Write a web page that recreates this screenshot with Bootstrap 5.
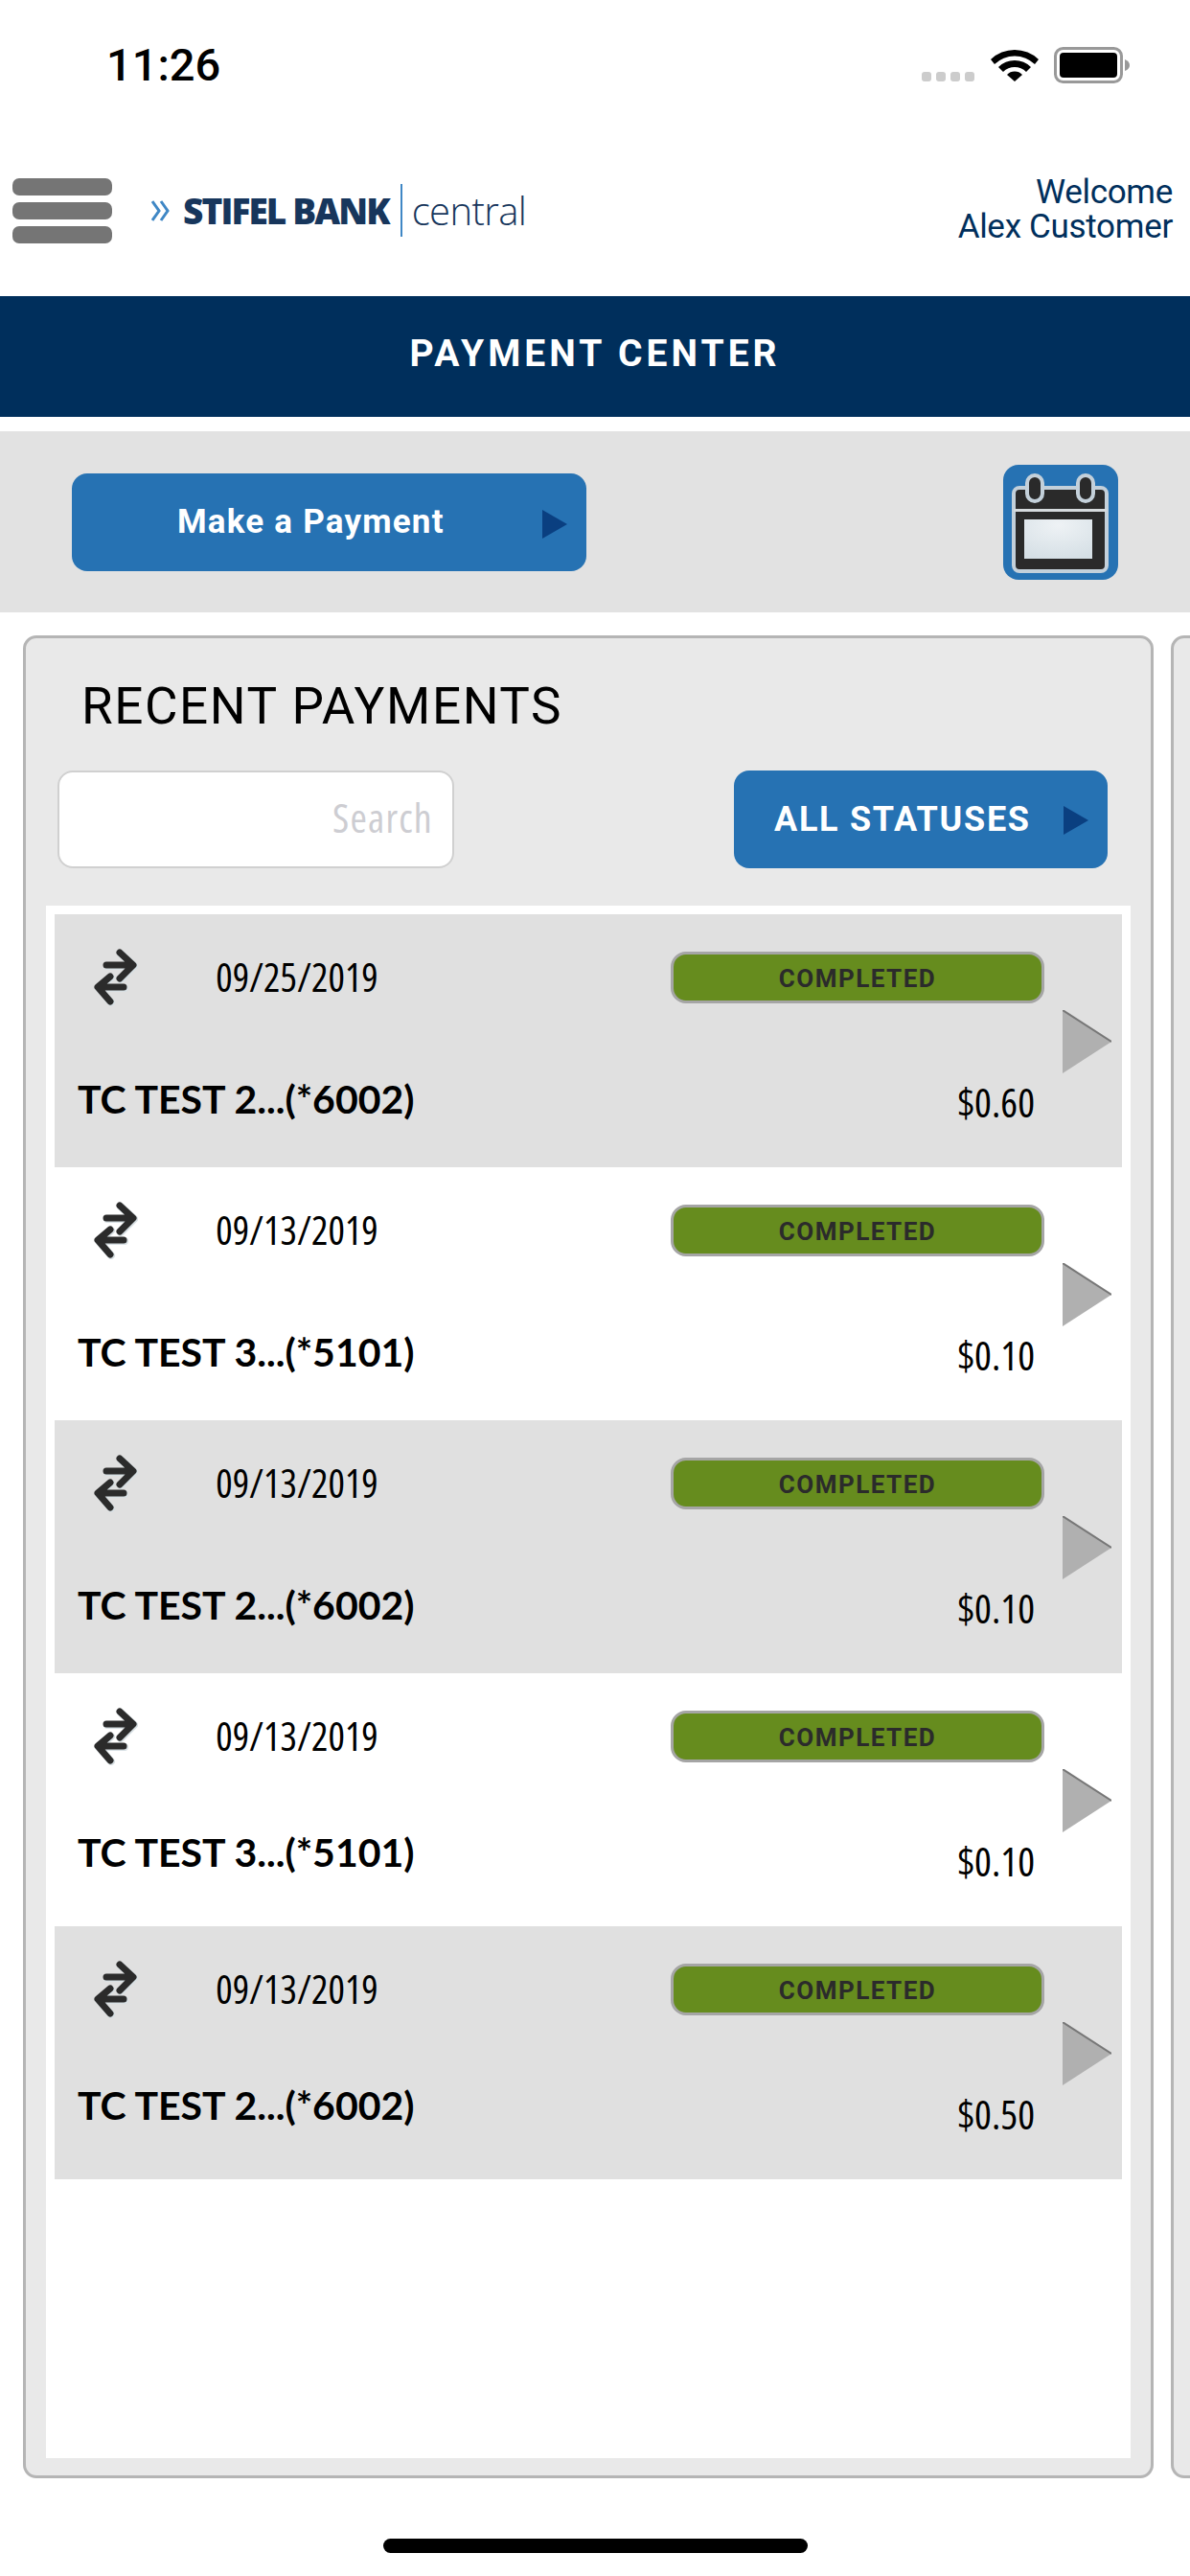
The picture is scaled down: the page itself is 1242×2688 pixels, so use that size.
<!DOCTYPE html>
<html lang="en">
<head>
    <meta charset="UTF-8">
    <meta name="viewport" content="width=device-width, initial-scale=1.0">
    <title>Payment Center</title>
    <link href="https://cdn.jsdelivr.net/npm/bootstrap@5.3.2/dist/css/bootstrap.min.css" rel="stylesheet">
    <script src="https://cdn.jsdelivr.net/npm/bootstrap@5.3.2/dist/js/bootstrap.bundle.min.js"></script>
    <style>
        html, body { background: #fff; }
        body { width: 1242px; height: 2688px; overflow: hidden; font-family: "Open Sans", sans-serif; color: #000; }

        /* status bar */
        .status-bar { height: 130px; padding-top: 42px; align-items: flex-start; }
        .status-time { margin-left: 111px; font: 500 47px/52px Roboto, sans-serif; }
        .status-right { margin-left: auto; margin-right: 62px; margin-top: 7px; }
        .signal-dots { gap: 5px; margin-top: 26px; margin-right: 17px; }
        .signal-dots i { width: 10px; height: 10px; border-radius: 3px; background: #ccc; }

        /* top header */
        .top-head { height: 179px; padding: 0 18px 0 13px; }
        .burger { width: 104px; gap: 7px; }
        .burger i { height: 18px; border-radius: 7px; background: #757575; }
        .logo-wrap { margin-left: 41px; color: #17365c; }
        .logo-bold { font: 800 37px/40px "Open Sans", sans-serif; letter-spacing: -1.9px; margin-left: 13px; }
        .logo-rule { width: 2px; height: 55px; background: #3f87c5; margin: 0 10px 0 12px; }
        .logo-thin { font: 300 40px/40px "Open Sans", sans-serif; letter-spacing: -.6px; }
        .welcome { margin: 0 0 2px auto; text-align: right; color: #002f5c; font: 400 35px/36px Roboto, sans-serif; letter-spacing: -.3px; }

        .page-title { height: 126px; background: #002f5c; color: #fff; font: 700 39px/120px Roboto, sans-serif; letter-spacing: 4px; text-align: center; }

        /* action band */
        .action-band { height: 189px; margin-top: 15px; background: #e2e2e2; padding: 0 75px; }
        .pay-btn { width: 537px; height: 102px; background: #2672b3; border: 0; border-radius: 16px; color: #fff; font: 700 35px/96px Roboto, sans-serif; letter-spacing: 1.2px; padding: 0 0 0 110px; text-align: left; }
        .blue-tri { width: 0; height: 0; border-left: 26px solid #0a3f80; border-top: 15px solid transparent; border-bottom: 15px solid transparent; }
        .pay-btn .blue-tri { margin: 4px 20px 0 auto; }
        .cal-btn { width: 120px; height: 120px; background: #2672b3; border-radius: 16px; margin-left: auto; }

        /* cards */
        .card-strip { margin-top: 24px; gap: 18px; overflow: hidden; }
        .pay-panel { flex: 0 0 1180px; margin-left: 24px; height: 1923px; background: #e9e9e9; border: 3px solid #b5b5b5; border-radius: 14px; padding: 0 21px; }
        .next-panel { flex: 0 0 100px; height: 1923px; background: #e9e9e9; border: 3px solid #b5b5b5; border-radius: 14px; }
        .panel-title { font: 400 53px/60px Roboto, sans-serif; letter-spacing: 1.6px; margin: 41px 0 0 37px; }
        .panel-tools { margin: 37px 24px 0 12px; }
        .search-box { width: 414px; height: 102px; background: #fff; border: 2px solid #d0d0d0; border-radius: 16px; color: #cdcdd2; font: 400 42px/94px "Open Sans", sans-serif; font-stretch: 75%; letter-spacing: 1.2px; text-align: right; padding-right: 20px; }
        .status-btn { width: 390px; height: 102px; background: #2672b3; border: 0; border-radius: 16px; color: #fff; font: 700 36px/92px Roboto, sans-serif; letter-spacing: 1.7px; padding: 0 0 0 42px; text-align: left; margin-left: auto; }
        .status-btn .blue-tri { margin: 2px 20px 0 auto; }

        .pay-list { height: 1620px; background: #fff; margin-top: 39px; padding: 9px; }
        .pay-row { height: 264px; }
        .pay-row.shaded { background: #e0e0e0; }
        .row-main { width: 1052px; }
        .row-top { padding: 36px 0 0 41px; height: 96px; }
        .row-date { width: 312px; text-align: center; margin: -3px 0 0 10px; font: 400 41px/56px "Open Sans", sans-serif; font-stretch: 75%; }
        .status-pill { width: 390px; height: 54px; margin-left: 234px; background: #668c1e; border: 3px solid #a5a5a5; border-radius: 16px; color: #2b2b2b; font: 700 26px/50px Roboto, sans-serif; letter-spacing: 1.5px; text-align: center; }
        .row-bottom { padding: 72px 29px 0 24px; }
        .row-name { font: 700 41px/50px Lato, sans-serif; }
        .row-amt { font: 400 42px/50px "Open Sans", sans-serif; font-stretch: 75%; margin-top: 3px; }
        .row-name.up { margin-top: -6px; }
        .row-arrow { margin-top: 100px; }
        .row-arrow svg { display: block; }
        .home-bar { width: 443px; height: 15px; border-radius: 8px; background: #000; margin: 63px auto 0; }
    </style>
</head>
<body>

<div class="status-bar d-flex">
    <div class="status-time">11:26</div>
    <div class="status-right d-flex">
        <div class="signal-dots d-flex"><i></i><i></i><i></i><i></i></div>
        <svg width="50" height="36" viewBox="0 0 50 36"><path d="M0 13 A36 36 0 0 1 50 13 L46 18 A30 30 0 0 0 4 18Z M8 21 A24 24 0 0 1 42 21 L37 26 A17 17 0 0 0 13 26Z M17 29 A11 11 0 0 1 33 29 L25 36Z" fill="#000"/></svg>
        <svg width="80" height="38" viewBox="0 0 80 38" class="ms-3"><rect x="1.5" y="1.5" width="69" height="35" rx="8" fill="#fff" stroke="#999" stroke-width="3"/><rect x="6" y="6" width="60" height="26" rx="4" fill="#000"/><path d="M74 13 Q79 15 79 19 Q79 23 74 25Z" fill="#999"/></svg>
    </div>
</div>

<div class="top-head d-flex align-items-center">
    <div class="burger d-flex flex-column"><i></i><i></i><i></i></div>
    <div class="logo-wrap d-flex align-items-center">
        <svg width="20" height="22" viewBox="0 0 20 22"><path d="M1 1 L8 11 L1 21 M10 1 L17 11 L10 21" fill="none" stroke="#3f87c5" stroke-width="3"/></svg>
        <span class="logo-bold">STIFEL BANK</span><span class="logo-rule"></span><span class="logo-thin">central</span>
    </div>
    <div class="welcome">Welcome<br>Alex Customer</div>
</div>

<div class="page-title">PAYMENT CENTER</div>

<div class="action-band d-flex align-items-center">
    <button type="button" class="pay-btn d-flex align-items-center">Make a Payment<span class="blue-tri"></span></button>
    <div class="cal-btn d-flex align-items-center justify-content-center">
        <svg width="120" height="120" viewBox="0 0 120 120">
            <defs><radialGradient id="calFill" cx=".5" cy=".15" r=".9"><stop offset="0" stop-color="#eef2f5"/><stop offset="1" stop-color="#d5dfe5"/></radialGradient></defs>
            <rect x="11" y="24" width="97" height="87" rx="6" fill="#2a2a2a" stroke="#c3d0da" stroke-width="4"/>
            <rect x="25" y="11" width="16" height="27" rx="8" fill="#2a2a2a" stroke="#c3d0da" stroke-width="4"/>
            <rect x="78" y="11" width="16" height="27" rx="8" fill="#2a2a2a" stroke="#c3d0da" stroke-width="4"/>
            <rect x="11" y="46" width="97" height="3" fill="#d5dadd"/>
            <rect x="22" y="57" width="71" height="41" fill="url(#calFill)"/>
        </svg>
    </div>
</div>

<div class="card-strip d-flex">
    <div class="pay-panel">
        <div class="panel-title">RECENT PAYMENTS</div>
        <div class="panel-tools d-flex">
            <div class="search-box">Search</div>
            <button type="button" class="status-btn d-flex align-items-center">ALL STATUSES<span class="blue-tri"></span></button>
        </div>
        <div class="pay-list" id="payList"></div>
    </div>
    <div class="next-panel"></div>
</div>

<div class="home-bar"></div>

<script>
    const payments = [
        { date: "09/25/2019", name: "TC TEST 2...(*6002)", amt: "$0.60" },
        { date: "09/13/2019", name: "TC TEST 3...(*5101)", amt: "$0.10" },
        { date: "09/13/2019", name: "TC TEST 2...(*6002)", amt: "$0.10" },
        { date: "09/13/2019", name: "TC TEST 3...(*5101)", amt: "$0.10", up: true },
        { date: "09/13/2019", name: "TC TEST 2...(*6002)", amt: "$0.50", up: true }
    ];
    const swapIcon = `<svg width="46" height="60" viewBox="0 0 46 60"><g fill="none" stroke-linecap="round" stroke-linejoin="round"><path d="M14 18H41M28 5L42 18L28 32" stroke="#d8e0e4" stroke-width="8"/><path d="M32 41H6M18 30L5 41L18 56" stroke="#d8e0e4" stroke-width="8"/><path d="M13 17H40M27 4L41 17L27 31" stroke="#2b2b2b" stroke-width="7"/><path d="M31 40H5M17 29L4 40L17 55" stroke="#2b2b2b" stroke-width="7"/></g></svg>`;
    const arrowIcon = `<svg width="51" height="66" viewBox="0 0 51 66"><path d="M0 0L51 33L0 66Z" fill="#b0b0b0"/><path d="M0 0L51 33" stroke="#777" stroke-width="2" fill="none"/></svg>`;
    document.getElementById("payList").innerHTML = payments.map((p, i) => `
        <div class="pay-row d-flex ${i % 2 === 0 ? "shaded" : ""}">
            <div class="row-main">
                <div class="row-top d-flex align-items-center">${swapIcon}<div class="row-date">${p.date}</div><div class="status-pill">COMPLETED</div></div>
                <div class="row-bottom d-flex justify-content-between">
                    <div class="row-name ${p.up ? "up" : ""}">${p.name}</div>
                    <div class="row-amt">${p.amt}</div>
                </div>
            </div>
            <div class="row-arrow">${arrowIcon}</div>
        </div>`).join("");
</script>

</body>
</html>
